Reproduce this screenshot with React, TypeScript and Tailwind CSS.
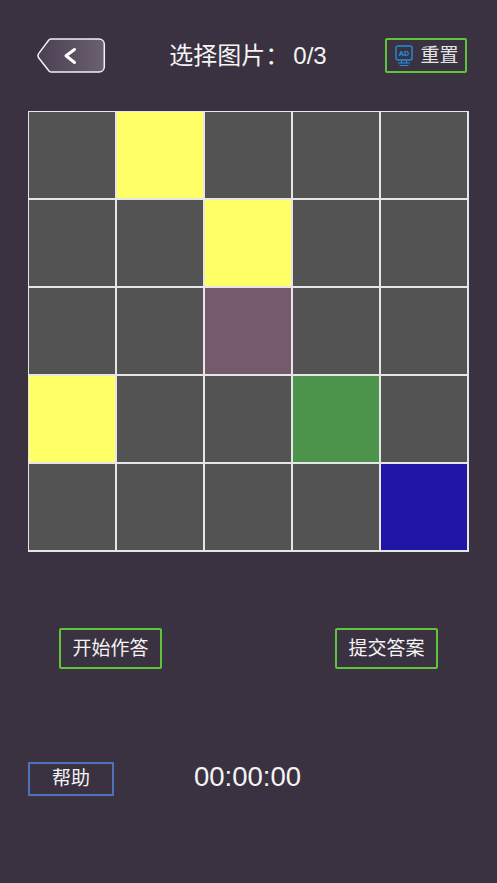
const CELL_COLORS: Record<number, string> = {
  1: 'bg-[#ffff66]',
  7: 'bg-[#ffff66]',
  12: 'bg-[#745a6b]',
  15: 'bg-[#ffff66]',
  18: 'bg-[#4c944c]',
  24: 'bg-[#2015a5]',
};

const fontClass = "font-['Liberation_Sans','Noto_Sans_CJK_SC',sans-serif]";

const BackButton = () => (
  <button className="h-[35px] w-[69px]">
    <svg width="69" height="35" viewBox="0 0 69 35" fill="none">
      <defs>
        <linearGradient id="backFill" x1="0" y1="0" x2="1" y2="0">
          <stop offset="0" stopColor="#4a4051" />
          <stop offset="1" stopColor="#6b6070" />
        </linearGradient>
      </defs>
      <path
        d="M14 1H62C65 1 67.3 3.3 67.3 6.3V28.7C67.3 31.7 65 34 62 34H14.5C13.5 34 12.6 33.6 12 32.9L2 20.3C0.8 18.8 0.8 16.6 2 15.1L11.6 2.3C12.2 1.5 13 1 14 1Z"
        fill="url(#backFill)"
        stroke="#f2f0f3"
        strokeWidth="1.5"
      />
      <path d="M37.5 11.5L29 17.8L37.5 24.5" stroke="#ffffff" strokeWidth="3" strokeLinecap="round" strokeLinejoin="round" />
    </svg>
  </button>
);

const AdIcon = () => (
  <svg width="18" height="22" viewBox="0 0 18 22" fill="none">
    <rect x="1" y="1" width="16" height="14" rx="2" stroke="#1f8fe0" strokeWidth="1.4" />
    <text x="9" y="11.2" textAnchor="middle" fontSize="8" fontFamily="Roboto, sans-serif" fontWeight="700" fill="#1f8fe0">
      AD
    </text>
    <path d="M6.5 15.5V18M11.5 15.5V18M3 18H15M4.5 20.5H13.5" stroke="#1f8fe0" strokeWidth="1.2" />
  </svg>
);

const App = () => {
  return (
    <div className={`flex h-[883px] w-[497px] flex-col bg-[#3b3241] text-[#f4f4f4] ${fontClass}`}>
      {/* header */}
      <div className="flex h-[73px] items-end justify-between pl-[37px] pr-[30px]">
        <BackButton />
        <div className="mb-[-1px] ml-[5px] text-[24px] leading-[36px]">
          选择图片：<span className="ml-[4px]">0/3</span>
        </div>
        <button className="flex h-[35px] w-[82px] items-center justify-center gap-[7px] rounded-[2px] border-2 border-[#5fc33b] pl-[2px] text-[19px] text-[#e4e4e4]">
          <AdIcon />
          <span className="pt-[1px]">重置</span>
        </button>
      </div>

      {/* board */}
      <div className="ml-[28px] mt-[38px] grid w-[441px] grid-cols-[repeat(5,86px)] gap-[2px] bg-[#e6e6e6] pb-[2px] pl-[1px] pr-[2px] pt-[1px]">
        {Array.from({length: 25}).map((_, index) => (
          <div key={index} className={`h-[86px] ${CELL_COLORS[index] ?? 'bg-[#535353]'}`} />
        ))}
      </div>

      {/* actions */}
      <div className="mt-[76px] flex justify-between pl-[59px] pr-[59px]">
        <button className="h-[41px] w-[103px] rounded-[2px] border-2 border-[#5fc33b] pt-[1px] text-[19px]">开始作答</button>
        <button className="h-[41px] w-[103px] rounded-[2px] border-2 border-[#5fc33b] pt-[1px] text-[19px]">提交答案</button>
      </div>

      {/* footer */}
      <div className="mt-[93px] flex items-start pl-[28px]">
        <button className="h-[34px] w-[86px] border-2 border-[#4d72b8] pt-[1px] text-[19px]">帮助</button>
        <div className="ml-[80px] mt-[-2px] text-[27.5px] leading-[34px]">00:00:00</div>
      </div>
    </div>
  );
};

export default App;
